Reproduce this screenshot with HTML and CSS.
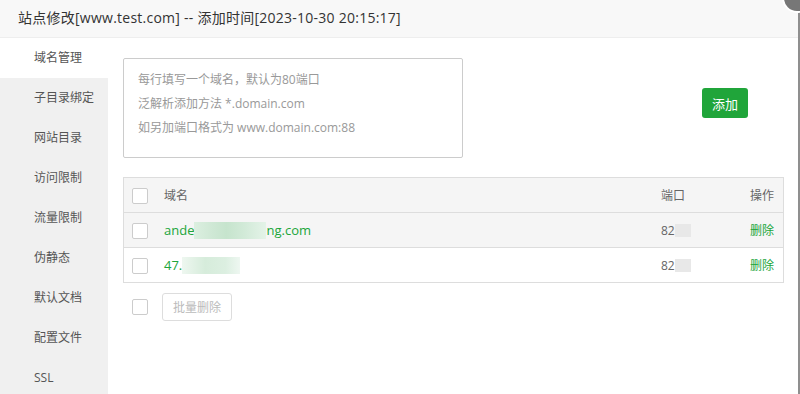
FILE: index.html
```html
<!DOCTYPE html>
<html lang="zh-CN">
<head>
    <meta charset="UTF-8">
    <title>站点修改</title>
    <link rel="stylesheet" href="styles.css">
</head>
<body>

    <div class="layer">
        <div class="layer-title">站点修改[www.test.com] -- 添加时间[2023-10-30 20:15:17]</div>

        <div class="layer-body">
            <ul class="side-menu">
                <li class="active">域名管理</li>
                <li>子目录绑定</li>
                <li>网站目录</li>
                <li>访问限制</li>
                <li>流量限制</li>
                <li>伪静态</li>
                <li>默认文档</li>
                <li>配置文件</li>
                <li>SSL</li>
            </ul>

            <div class="content">
                <div class="add-row">
                    <div class="domain-input">
                        <p>每行填写一个域名，默认为80端口</p>
                        <p>泛解析添加方法 *.domain.com</p>
                        <p>如另加端口格式为 www.domain.com:88</p>
                    </div>
                    <button class="btn-green">添加</button>
                </div>

                <table class="domain-table">
                    <thead>
                        <tr>
                            <th class="col-check"><span class="checkbox"></span></th>
                            <th>域名</th>
                            <th class="col-port">端口</th>
                            <th class="col-op">操作</th>
                        </tr>
                    </thead>
                    <tbody>
                        <tr class="hover">
                            <td class="col-check"><span class="checkbox"></span></td>
                            <td><a class="link domain">ande<span class="mosaic mosaic-long"></span>ng.com</a></td>
                            <td class="col-port">82<span class="mosaic-grey"></span></td>
                            <td class="col-op"><a class="link">删除</a></td>
                        </tr>
                        <tr>
                            <td class="col-check"><span class="checkbox"></span></td>
                            <td><a class="link domain">47.<span class="mosaic mosaic-short"></span></a></td>
                            <td class="col-port">82<span class="mosaic-grey"></span></td>
                            <td class="col-op"><a class="link">删除</a></td>
                        </tr>
                    </tbody>
                </table>

                <div class="batch-row">
                    <span class="checkbox"></span>
                    <button class="btn-disabled">批量删除</button>
                </div>
            </div>
        </div>

        <span class="layer-close"></span>
    </div>

</body>
</html>
```

FILE: styles.css
```css
body {
    margin: 0;
    background-color: #8f8f8f;
    font-family: "Open Sans", "Noto Sans CJK SC", sans-serif;
    font-size: 12px;
    color: #555;
    overflow: hidden;
}

.layer {
    position: relative;
    width: 798px;
    height: 394px;
    background-color: #fff;
}

.layer-title {
    height: 37px;
    line-height: 36px;
    padding-left: 18px;
    background-color: #f8f8f8;
    border-bottom: 1px solid #eee;
    font-size: 14px;
    letter-spacing: 0.25px;
    color: #333;
}

.layer-close {
    position: absolute;
    left: 782px;
    top: -17px;
    width: 26px;
    height: 26px;
    border-radius: 50%;
    background-color: #777;
    border: 2px solid #fff;
}

.layer-body {
    display: flex;
    height: 356px;
}

/* left menu */
.side-menu {
    flex-shrink: 0;
    width: 108px;
    margin: 0;
    padding: 0;
    list-style: none;
    background-color: #f0f0f0;
}

.side-menu li {
    height: 40px;
    line-height: 40px;
    padding-left: 34px;
    color: #555;
}

.side-menu li.active {
    background-color: #fff;
}

/* main area */
.content {
    flex: 1;
    padding: 20px 15px 0 15px;
}

.add-row {
    display: flex;
    align-items: flex-start;
}

.domain-input {
    flex-shrink: 0;
    width: 324px;
    height: 81px;
    padding: 9px 0 8px 14px;
    border: 1px solid #ccc;
    border-radius: 2px;
    color: #999;
}

.domain-input p {
    margin: 0;
    line-height: 24px;
}

.btn-green {
    margin: 30px 0 0 239px;
    width: 46px;
    height: 30px;
    padding: 0;
    border: none;
    border-radius: 3px;
    background-color: #20a53a;
    color: #fff;
    font-family: inherit;
    font-size: 13px;
}

/* table */
.domain-table {
    width: 661px;
    margin-top: 19px;
    border-collapse: collapse;
    border: 1px solid #ddd;
}

.domain-table th,
.domain-table td {
    height: 34px;
    padding: 0;
    text-align: left;
    font-weight: normal;
    border-bottom: 1px solid #ddd;
    color: #666;
}

.domain-table thead tr,
.domain-table tr.hover {
    background-color: #f5f5f5;
}

.domain-table .col-check {
    width: 32px;
    padding-left: 8px;
}

.domain-table .col-port {
    width: 89px;
}

.domain-table .col-op {
    width: 24px;
    padding-right: 9px;
    text-align: right;
}

.checkbox {
    display: inline-block;
    width: 14px;
    height: 14px;
    border: 1px solid #ccc;
    border-radius: 2px;
    background-color: #fff;
    vertical-align: middle;
}

.link {
    color: #20a53a;
}

.domain {
    font-size: 13px;
}

/* blurred values */
.mosaic {
    display: inline-block;
    height: 17px;
    vertical-align: -4px;
    background: linear-gradient(90deg, #dcefe0 0%, #cfe8d5 25%, #c6e4cd 45%, #d2ead8 70%, #e4f3e8 100%);
}

.mosaic-long {
    width: 72px;
}

.mosaic-short {
    width: 58px;
    background: linear-gradient(90deg, #eef7f0 0%, #d6ecdb 40%, #dcefe1 75%, #eef7f1 100%);
}

.mosaic-grey {
    display: inline-block;
    width: 16px;
    height: 13px;
    vertical-align: -2px;
    background-color: #e8e8e8;
}

.batch-row {
    display: flex;
    align-items: center;
    gap: 14px;
    margin-top: 10px;
    padding-left: 9px;
}

.btn-disabled {
    height: 28px;
    padding: 0 10px;
    border: 1px solid #ddd;
    border-radius: 3px;
    background-color: #fff;
    color: #bbb;
    font-family: inherit;
    font-size: 12px;
}
```
